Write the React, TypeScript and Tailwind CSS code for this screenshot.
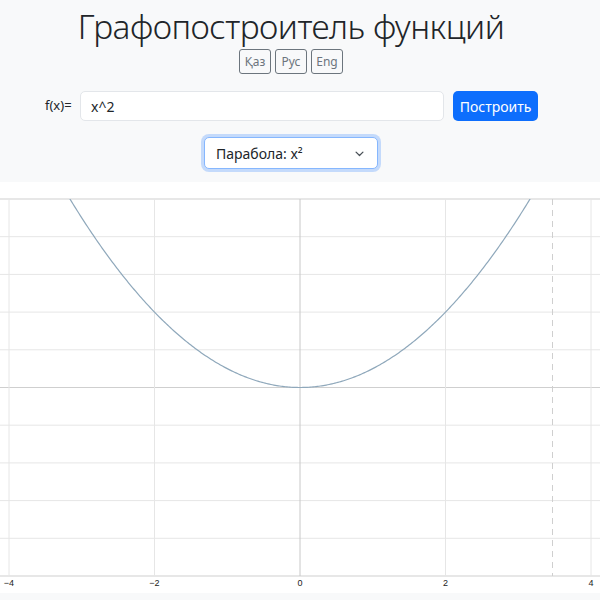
import { useMemo } from "react";

const X0 = 300;
const Y0 = 205.5;
const SX = 72.75;
const SY = 18.85;

function Graph() {
  const path = useMemo(() => {
    const pts: string[] = [];
    for (let x = -3.3; x <= 3.3; x += 0.02) {
      const y = x * x;
      if (y > 10.6) continue;
      pts.push(`${(X0 + x * SX).toFixed(2)},${(Y0 - y * SY).toFixed(2)}`);
    }
    return "M" + pts.join(" L");
  }, []);

  const xs = [-4, -2, 0, 2, 4];
  const ys = [-10, -8, -6, -4, -2, 0, 2, 4, 6, 8, 10];
  const top = Y0 - 10 * SY;
  const bottom = Y0 + 10 * SY;

  return (
    <svg width="600" height="411" viewBox="0 0 600 411" className="block">
      <defs>
        <clipPath id="plot">
          <rect x="0" y={top} width="600" height={bottom - top} />
        </clipPath>
      </defs>
      {ys.map((v) => (
        <line
          key={"h" + v}
          x1="0"
          x2="600"
          y1={Y0 - v * SY}
          y2={Y0 - v * SY}
          stroke={v === 0 || v === -10 || v === 10 ? "#cfcfcf" : "#e6e6e6"}
          strokeWidth="1"
        />
      ))}
      {xs.map((v) => (
        <line
          key={"v" + v}
          x1={X0 + v * SX}
          x2={X0 + v * SX}
          y1={top}
          y2={bottom}
          stroke={v === 0 ? "#c8c8c8" : "#e6e6e6"}
          strokeWidth="1"
        />
      ))}
      <line
        x1="552.5"
        x2="552.5"
        y1={top}
        y2={bottom}
        stroke="#cfcfcf"
        strokeWidth="1"
        strokeDasharray="6 5"
      />
      <g clipPath="url(#plot)">
        <path d={path} fill="none" stroke="#8fa8bb" strokeWidth="1.2" />
      </g>
      {xs.map((v) => (
        <text
          key={"t" + v}
          x={X0 + v * SX}
          y={bottom + 10}
          fontSize="9"
          textAnchor="middle"
          fill="#222"
          fontFamily="'Liberation Sans', sans-serif"
        >
          {v < 0 ? "\u2212" + Math.abs(v) : v}
        </text>
      ))}
    </svg>
  );
}

export default function App() {
  return (
    <div className="min-h-[600px] bg-[#f8f9fa] font-['Noto_Sans',sans-serif] text-[#212529]">
      <div className="flex h-[182px] flex-col items-center pr-[18px]">
        <h1 className="mt-[3px] h-[46px] text-[33.5px] font-light leading-[46px] tracking-[-0.5px]">
          Графопостроитель функций
        </h1>
        <div className="flex gap-[4px]">
          {["Қаз", "Рус", "Eng"].map((l) => (
            <button
              key={l}
              className="h-[25px] w-[32px] rounded-[3px] border border-[#6c757d] text-[12px] text-[#6c757d]"
            >
              {l}
            </button>
          ))}
        </div>
        <div className="mt-[17px] flex w-full items-center pl-[45px]">
          <span className="w-[35px] text-[13px]">f(x)=</span>
          <input
            defaultValue="x^2"
            className="h-[30px] w-[364px] rounded-[5px] border border-[#e3e6ea] bg-white px-[10px] text-[14px] outline-none"
          />
          <button className="ml-[9px] h-[30px] w-[85px] rounded-[5px] bg-[#0d6efd] text-[14px] text-white">
            Построить
          </button>
        </div>
        <div className="mt-[16px]">
          <div className="flex h-[32px] w-[174px] items-center justify-between rounded-[5px] border border-[#86b7fe] bg-white pl-[11px] pr-[12px] text-[14px] shadow-[0_0_0_3px_rgba(13,110,253,0.22)]">
            <span>Парабола: x²</span>
            <svg width="11" height="11" viewBox="0 0 16 16">
              <path
                d="M3 6l5 5 5-5"
                fill="none"
                stroke="#495057"
                strokeWidth="1.8"
                strokeLinecap="round"
                strokeLinejoin="round"
              />
            </svg>
          </div>
        </div>
      </div>
      <div className="bg-white">
        <Graph />
      </div>
    </div>
  );
}
